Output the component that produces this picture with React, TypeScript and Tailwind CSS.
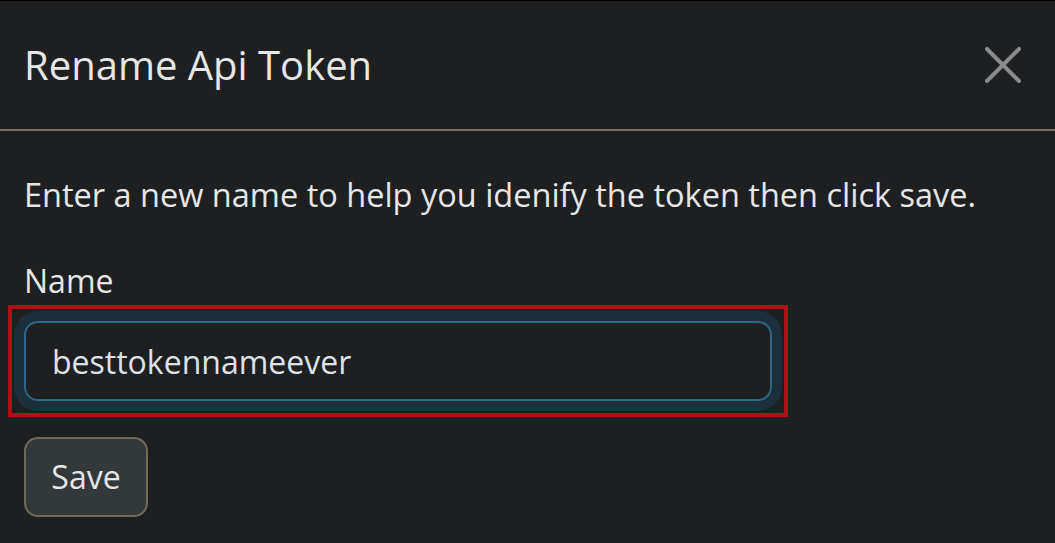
import React from 'react';

const font = { fontFamily: '"Open Sans", "Noto Sans", sans-serif' };

function CloseIcon() {
  return (
    <svg width="36" height="36" viewBox="0 0 36 36" fill="none">
      <path d="M2 2L34 34M34 2L2 34" stroke="#8b8b8b" strokeWidth="4" strokeLinecap="round" />
    </svg>
  );
}

export default function App() {
  return (
    <div
      className="w-[1055px] h-[543px] overflow-hidden bg-[#1e1f21] text-[#e6e6e6] border-t border-black"
      style={font}
    >
      <div className="flex items-center justify-between h-[130px] pl-[24px] pr-[34px] border-b-2 border-[#787164]">
        <h5 className="text-[40px] leading-none">Rename Api Token</h5>
        <button className="flex items-center justify-center">
          <CloseIcon />
        </button>
      </div>
      <div className="px-[24px] pt-[40px]">
        <p className="text-[32.5px] leading-[48px]">Enter a new name to help you idenify the token then click save.</p>
        <label className="block mt-[38px] text-[32px] leading-[48px]">Name</label>
        <div className="-ml-[16px] mt-0 w-[780px] border-4 border-[#b50d12] p-[12px]">
          <div className="rounded-[14px] shadow-[0_0_0_10px_#1b2f3c]">
            <input
              className="block w-full h-[80px] rounded-[14px] border-2 border-[#2b6786] bg-[#1e1f21] px-[26px] text-[32px] text-[#dee2e6] outline-none"
              style={font}
              defaultValue="besttokennameever"
            />
          </div>
        </div>
        <button className="mt-[20px] h-[80px] w-[124px] rounded-[14px] border-2 border-[#716a5a] bg-[#33383b] text-[32px] text-[#e6e6e6]">
          Save
        </button>
      </div>
    </div>
  );
}
